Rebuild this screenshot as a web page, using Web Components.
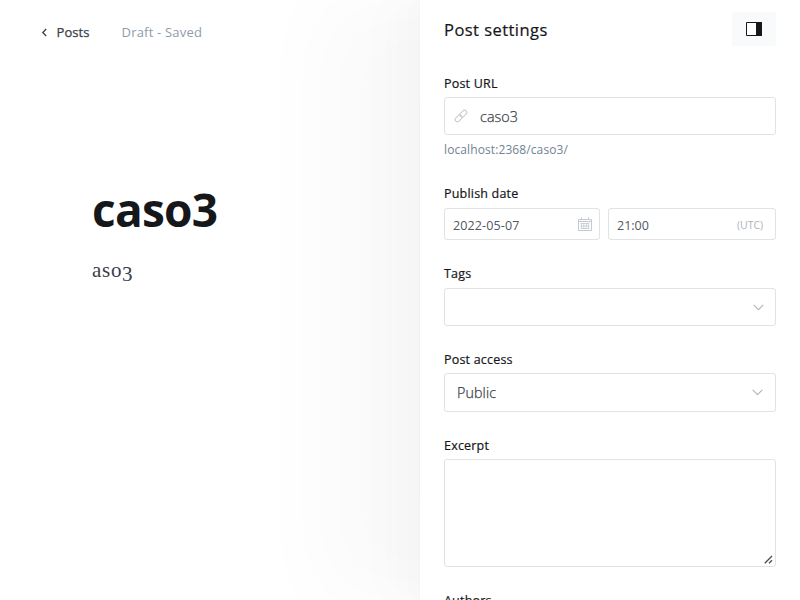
<!DOCTYPE html>
<html lang="en">
<head>
<meta charset="utf-8">
<title>Post settings</title>
<style>
html,body{margin:0;height:100%;overflow:hidden;background:#fff}
body{font-family:"Open Sans","Noto Sans",sans-serif;color:#15171a}
</style>
</head>
<body>
<post-editor></post-editor>
<script>
const define = (name, html) => customElements.define(name, class extends HTMLElement {
  constructor() {
    super();
    const t = document.createElement('template');
    t.innerHTML = html;
    this.attachShadow({mode: 'open'}).append(t.content.cloneNode(true));
  }
});

define('editor-header', `<style>
:host{display:flex;align-items:center;height:64px;padding-left:41px;font-size:13px;line-height:18px;box-sizing:border-box}
svg{width:7px;height:9px;margin-right:8.5px}
b{font-weight:500;color:#394047;letter-spacing:.08px;width:65px;-webkit-text-stroke:.25px #394047}
span{color:#8e9cac;letter-spacing:.2px}
</style><svg viewBox="0 0 7 9" fill="none" stroke="#394047" stroke-width="1.3"><path d="M5.2 1 1.8 4.5 5.2 8"/></svg><b>Posts</b><span>Draft - Saved</span>`);

define('editor-canvas', `<style>
:host{display:block;padding:115px 92px 0}
h1{margin:0;font-size:46px;line-height:60px;font-weight:700;letter-spacing:-.75px}
p{margin:16px 0 0;font:21px/30px "Liberation Serif",serif;color:#394047;letter-spacing:.7px}
i{font-style:normal;position:relative;top:4px}
</style><h1>caso3</h1><p>aso<i>3</i></p>`);

define('panel-header', `<style>
:host{display:flex;justify-content:space-between;height:34px;margin-bottom:29px}
h2{margin:0;font-size:16.5px;line-height:35px;font-weight:500;letter-spacing:.45px;-webkit-text-stroke:.2px #15171a}
div{width:44px;height:34px;border-radius:3px;background:#f9fafb;display:flex}
svg{width:16px;height:14px;margin:10px 0 0 14px}
</style><h2><slot></slot></h2><div><svg viewBox="0 0 16 14"><path d="M.5.5h15v13H.5z" fill="#fff" stroke="#15171a"/><path d="M10 0h6v14h-6z" fill="#15171a"/></svg></div>`);

define('setting-group', `<style>
:host{display:block}
label{display:block;font-size:12.5px;line-height:18px;font-weight:500;letter-spacing:.2px;margin-bottom:4px;-webkit-text-stroke:.2px #15171a}
</style><label><slot name="label"></slot></label><slot></slot>`);

define('input-box', `<style>
:host{display:flex;align-items:center;box-sizing:border-box;border:1px solid #e0e2e4;border-radius:3px;background:#fff;height:38px;padding:0 12px;color:#394047;font-size:14.3px}
::slotted(.end){margin-left:auto}
</style><slot></slot>`);

define('link-icon', `<style>:host{display:block;width:14px;height:14px}svg{display:block}</style>
<svg width="14" height="14" viewBox="0 0 14 14" fill="none" stroke="#c9cdd1" stroke-width="1.1"><rect x="-3.8" y="-2.2" width="7.6" height="4.4" rx="2.2" transform="translate(9.4 4.6) rotate(-45)"/><rect x="-3.8" y="-2.2" width="7.6" height="4.4" rx="2.2" transform="translate(4.6 9.4) rotate(-45)"/></svg>`);

define('calendar-icon', `<style>:host{display:block;width:14px;height:14px;position:relative;top:-1px}svg{display:block}</style>
<svg width="14" height="14" viewBox="0 0 14 14" fill="none" stroke="#c3c9cf"><path d="M.5 2.5h13v11H.5zM.5 4.5h13"/><path d="M3.5 0v3M10.5 0v3M3.5 6v6M5.8 6v6M8.2 6v6M10.5 6v6M2.5 6.5h9M2.5 9h9M2.5 11.5h9" stroke-width=".8"/></svg>`);

define('chevron-icon', `<style>:host{display:block;width:11px;height:7px}svg{display:block}</style>
<svg width="11" height="7" viewBox="0 0 11 7" fill="none" stroke="#b0b7be" stroke-width="1.1"><path d="m.7.8 4.8 4.9L10.3.8"/></svg>`);

define('text-area', `<style>
:host{display:flex;align-items:flex-end;justify-content:flex-end;box-sizing:border-box;height:108px;border:1px solid #e0e2e4;border-radius:3px;padding:2px}
</style><svg width="9" height="9" viewBox="0 0 9 9" fill="none" stroke="#4b4b4b" stroke-width="1.3"><path d="M.8 8.2 8 1M5 8.2 8 5.2"/></svg>`);

define('settings-panel', `<style>
:host{display:block;box-sizing:border-box;height:600px;padding:12px 24px 0;background:#fff;overflow:hidden;
box-shadow:0 0 1px rgba(0,0,0,.08),-6.7px 0 5.3px rgba(0,0,0,.004),-12.5px 0 10px rgba(0,0,0,.006),-22.3px 0 17.9px rgba(0,0,0,.008),-41.8px 0 33.4px rgba(0,0,0,.012),-100px 0 80px rgba(0,0,0,.024)}
.url{padding-left:9px}.url span{margin-left:12px}
.url span,.access span{font-weight:300;-webkit-text-stroke:.25px #394047;letter-spacing:.1px}
.hint{font-size:12px;line-height:18px;color:#738393;margin:6px 0 26px;letter-spacing:.1px}
.dates{display:grid;grid-template-columns:156px 168px;gap:8px;margin-top:5px;margin-bottom:25px}
.dates input-box{height:32px;font-size:12.5px;padding:2px 7px 0 8px;color:#505860}
.dates .date span{letter-spacing:.12px}
.dates .time{padding-right:12px}
.utc{font-size:10.5px;color:#abb4be;letter-spacing:-.05px}
.tags{margin-top:5px;margin-bottom:25px;height:38px}
.access{margin-bottom:25px;height:39px}
.tags chevron-icon{position:relative;left:1px}
</style>
<panel-header>Post settings</panel-header>
<setting-group><span slot="label">Post URL</span>
<input-box class="url"><link-icon></link-icon><span>caso3</span></input-box>
<div class="hint">localhost:2368/caso3/</div></setting-group>
<setting-group><span slot="label">Publish date</span>
<div class="dates"><input-box class="date"><span>2022-05-07</span><calendar-icon class="end"></calendar-icon></input-box><input-box class="time"><span>21:00</span><span class="utc end">(UTC)</span></input-box></div></setting-group>
<setting-group><span slot="label">Tags</span><input-box class="tags"><chevron-icon class="end"></chevron-icon></input-box></setting-group>
<setting-group><span slot="label">Post access</span><input-box class="access"><span>Public</span><chevron-icon class="end"></chevron-icon></input-box></setting-group>
<setting-group><span slot="label">Excerpt</span><text-area></text-area></setting-group>
<setting-group style="margin-top:25px"><span slot="label">Authors</span></setting-group>`);

define('post-editor', `<style>
:host{display:grid;grid-template-columns:420px 380px;width:800px;height:600px;overflow:hidden}
settings-panel{z-index:0}
main{position:relative;z-index:1}
</style><main><editor-header></editor-header><editor-canvas></editor-canvas></main><settings-panel></settings-panel>`);
</script>
</body>
</html>
